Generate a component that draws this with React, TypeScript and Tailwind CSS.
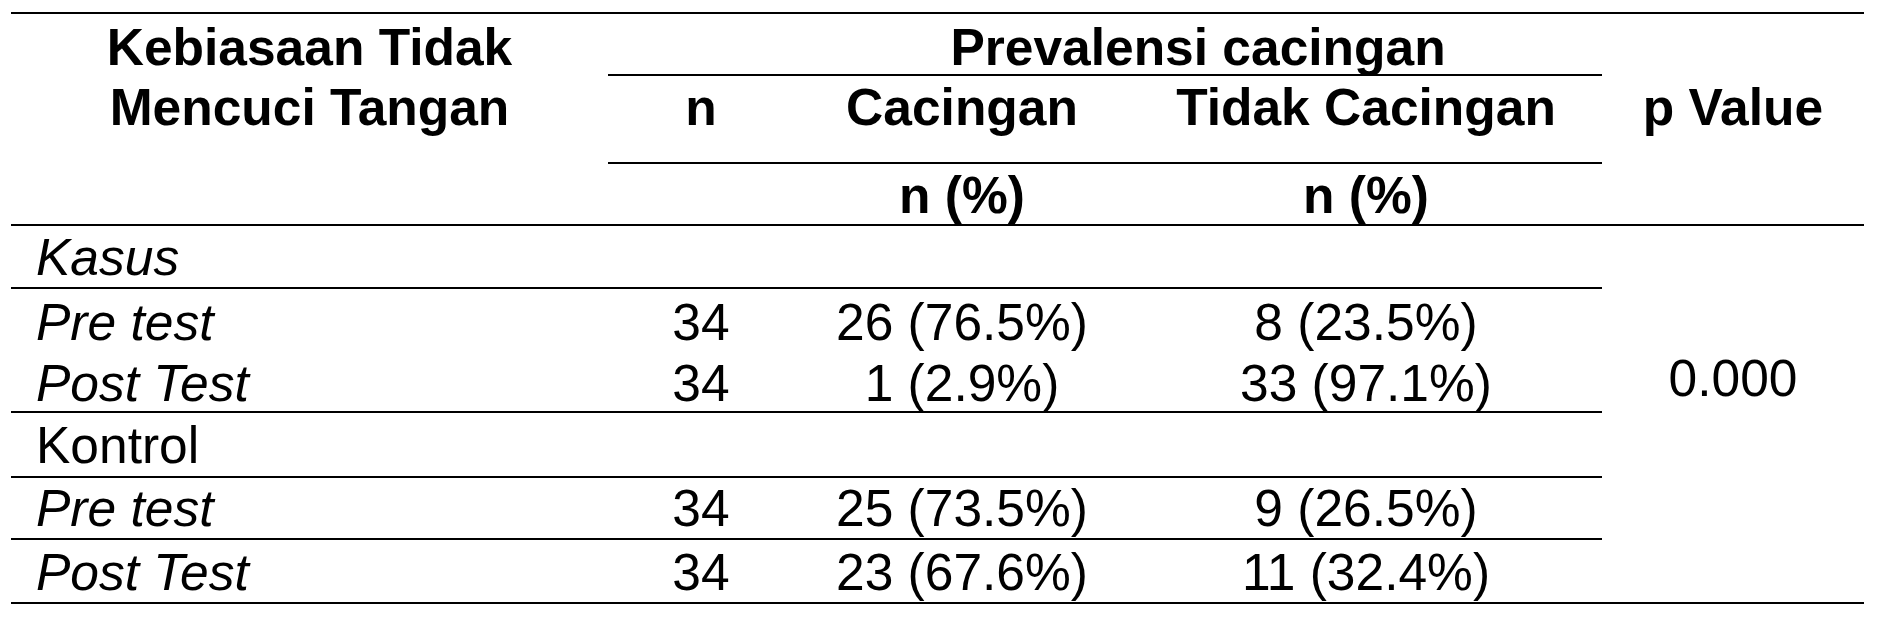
type Row = {
  label: string
  italic: boolean
  n?: string
  cac?: string
  tidak?: string
  line: boolean
  pad: string
}

// body rows of the table, top to bottom
const rows: Row[] = [
  { label: 'Kasus', italic: true, line: true, pad: 'pt-[1px]' },
  { label: 'Pre test', italic: true, n: '34', cac: '26 (76.5%)', tidak: '8 (23.5%)', line: false, pad: 'pt-[3px]' },
  { label: 'Post Test', italic: true, n: '34', cac: '1 (2.9%)', tidak: '33 (97.1%)', line: true, pad: 'pt-[3px]' },
  { label: 'Kontrol', italic: false, line: true, pad: 'pt-[2px]' },
  { label: 'Pre test', italic: true, n: '34', cac: '25 (73.5%)', tidak: '9 (26.5%)', line: true, pad: 'pt-[0px]' },
  { label: 'Post Test', italic: true, n: '34', cac: '23 (67.6%)', tidak: '11 (32.4%)', line: true, pad: 'pt-[2px]' }
]

function BodyRow(props: { row: Row }) {
  const { row } = props
  const line = row.line ? 'border-b-2 border-black' : ''
  return (
    <>
      <div className={`${line} ${row.pad} pl-[25px] ${row.italic ? 'italic' : ''}`}>{row.label}</div>
      <div className={`${line} ${row.pad} text-center`}>{row.n}</div>
      <div className={`${line} ${row.pad} text-center`}>{row.cac}</div>
      <div className={`${line} ${row.pad} text-center`}>{row.tidak}</div>
    </>
  )
}

export default function App() {
  return (
    <div className="h-[626px] w-[1882px] overflow-hidden bg-white pl-[11px] pt-[12px] font-['Liberation_Sans',Arial,sans-serif] text-[51.5px] leading-[60px] text-black">
      <div className="grid w-[1853px] grid-cols-[597px_186px_336px_472px_262px] grid-rows-[62px_88px_62px_63px_61px_63px_65px_62px_64px] border-t-2 border-black">
        <div className="col-start-1 row-start-1 row-span-3 border-b-2 border-black pt-[3px] text-center font-bold">
          Kebiasaan Tidak
          <br />
          Mencuci Tangan
        </div>
        <div className="col-start-5 row-start-1 row-span-3 border-b-2 border-black pt-[63px] text-center font-bold">
          p Value
        </div>
        <div className="col-start-5 row-start-4 row-span-6 border-b-2 border-black pt-[122px] text-center">0.000</div>

        <div className="border-b-2 border-black"></div>
        <div className="col-span-2 border-b-2 border-black pt-[3px] text-center font-bold">Prevalensi cacingan</div>

        <div className="border-b-2 border-black pt-[1px] text-center font-bold">n</div>
        <div className="border-b-2 border-black pt-[1px] text-center font-bold">Cacingan</div>
        <div className="border-b-2 border-black pt-[1px] text-center font-bold">Tidak Cacingan</div>

        <div className="border-b-2 border-black"></div>
        <div className="border-b-2 border-black pt-[1px] text-center font-bold">n (%)</div>
        <div className="border-b-2 border-black pt-[1px] text-center font-bold">n (%)</div>

        {rows.map((row, i) => (
          <BodyRow row={row} key={i} />
        ))}
      </div>
    </div>
  )
}
